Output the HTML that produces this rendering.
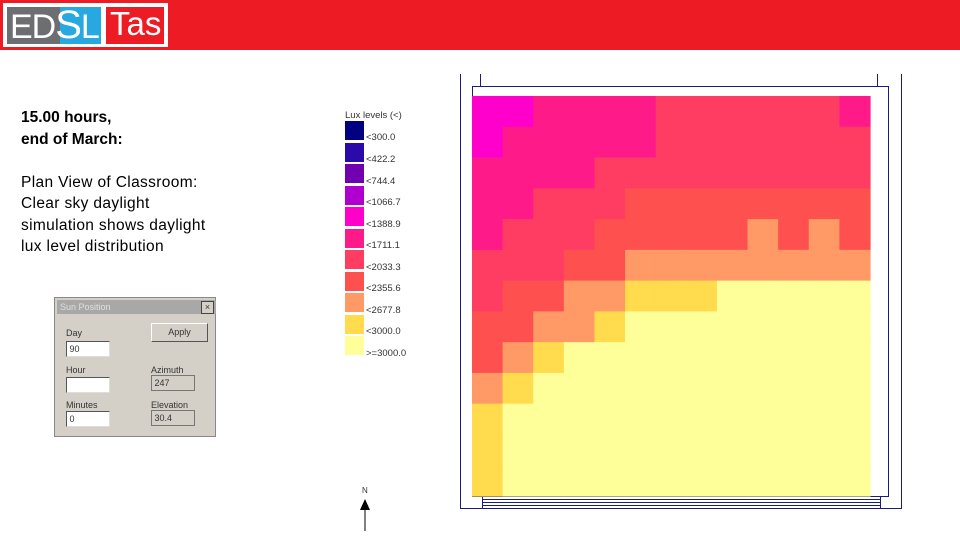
<!DOCTYPE html>
<html><head><meta charset="utf-8"><style>
body{margin:0;width:960px;height:540px;overflow:hidden;background:#fff;font-family:"Liberation Sans",sans-serif;position:relative}
.hdr{position:absolute;left:0;top:0;width:960px;height:50px;background:#ed1c24}
.txt{position:absolute;left:21px;top:107px;font-size:15.5px;line-height:21.5px;color:#000;letter-spacing:0.35px}
.dlg{position:absolute;left:54px;top:297px;width:160px;height:138px;background:#d4d0c8;border:1px solid #888;font-size:9px;color:#333}
.dlg div{position:absolute}
.in{background:#fff;border:1px solid #555;border-right-color:#ddd;border-bottom-color:#ddd}
</style></head><body>
<div class="hdr"></div>
<div style="position:absolute;left:3px;top:3px;width:165px;height:44px;background:#fff"></div>
<div style="position:absolute;left:7px;top:7px;width:53px;height:37px;background:#6d6e71"></div>
<div style="position:absolute;left:60px;top:7px;width:41px;height:37px;background:#27a8e0"></div>
<div style="position:absolute;left:106px;top:7px;width:58px;height:37px;background:#ed1c24"></div>
<div style="position:absolute;left:10px;top:5px;font-size:34px;color:#fff;letter-spacing:-1px;line-height:40px">ED<span style="font-size:40px">S</span>L</div>
<div style="position:absolute;left:110px;top:4px;font-size:33px;color:#fff;line-height:40px">Tas</div>
<div class="txt"><span style="font-weight:bold;letter-spacing:0">15.00 hours,<br>end of March:</span><br><br>Plan View of Classroom:<br>Clear sky daylight<br>simulation shows daylight<br>lux level distribution</div>
<div class="dlg">
<div style="left:2px;top:2px;width:156px;height:14px;background:#a8a8a8;color:#e0e0e0;padding-left:3px;line-height:14px">Sun Position</div>
<div style="left:146px;top:3px;width:11px;height:11px;background:#d4d0c8;border:1px solid #444;font-size:9px;line-height:10px;text-align:center">×</div>
<div style="left:11px;top:30px">Day</div>
<div class="in" style="left:11px;top:43px;width:42px;height:14px;line-height:14px">&nbsp;90</div>
<div style="left:96px;top:25px;width:55px;height:17px;border:1px solid #fff;border-right-color:#555;border-bottom-color:#555;text-align:center;line-height:17px">Apply</div>
<div style="left:11px;top:67px">Hour</div>
<div class="in" style="left:11px;top:79px;width:42px;height:14px"></div>
<div style="left:96px;top:67px">Azimuth</div>
<div style="left:96px;top:77px;width:42px;height:14px;border:1px solid #777;line-height:14px">&nbsp;247</div>
<div style="left:11px;top:102px">Minutes</div>
<div class="in" style="left:11px;top:113px;width:42px;height:14px;line-height:14px">&nbsp;0</div>
<div style="left:96px;top:102px">Elevation</div>
<div style="left:96px;top:112px;width:42px;height:14px;border:1px solid #777;line-height:14px">&nbsp;30.4</div>
</div>
<svg style="position:absolute;left:0;top:0" width="960" height="540">
<g font-size="9.5" fill="#333" font-family="Liberation Sans">
<text x="345" y="118">Lux levels (&lt;)</text>
<rect x="345" y="121" width="19" height="19" fill="#000080"/><text x="366" y="140">&lt;300.0</text>
<rect x="345" y="143" width="19" height="19" fill="#2a0aa8"/><text x="366" y="162">&lt;422.2</text>
<rect x="345" y="164" width="19" height="19" fill="#7000b0"/><text x="366" y="184">&lt;744.4</text>
<rect x="345" y="186" width="19" height="19" fill="#b000d0"/><text x="366" y="205">&lt;1066.7</text>
<rect x="345" y="207" width="19" height="19" fill="#ff00cc"/><text x="366" y="227">&lt;1388.9</text>
<rect x="345" y="229" width="19" height="19" fill="#ff1a8a"/><text x="366" y="248">&lt;1711.1</text>
<rect x="345" y="250" width="19" height="19" fill="#ff3d63"/><text x="366" y="270">&lt;2033.3</text>
<rect x="345" y="272" width="19" height="19" fill="#ff5050"/><text x="366" y="291">&lt;2355.6</text>
<rect x="345" y="293" width="19" height="19" fill="#ff9966"/><text x="366" y="313">&lt;2677.8</text>
<rect x="345" y="315" width="19" height="19" fill="#ffdb4d"/><text x="366" y="334">&lt;3000.0</text>
<rect x="345" y="336" width="19" height="19" fill="#ffff99"/><text x="366" y="356">&gt;=3000.0</text>
<text x="362" y="493" font-size="8">N</text>
</g>
<line x1="365" y1="500" x2="365" y2="531" stroke="#000"/>
<path d="M360 510 L365 499 L370 510 Z" fill="#000"/>
<g stroke="#1a1a80" fill="none" stroke-width="1">
<line x1="460.5" y1="74" x2="460.5" y2="508"/><line x1="901.5" y1="74" x2="901.5" y2="508"/>
<line x1="460" y1="508.5" x2="902" y2="508.5"/>
<line x1="480.5" y1="74" x2="480.5" y2="86"/><line x1="877.5" y1="74" x2="877.5" y2="86"/>
<rect x="472.5" y="86.5" width="416" height="410"/>
<line x1="482" y1="499.5" x2="880" y2="499.5"/><line x1="482" y1="502.5" x2="880" y2="502.5"/><line x1="482" y1="505.5" x2="880" y2="505.5"/>
<line x1="482.5" y1="497" x2="482.5" y2="508"/><line x1="880.5" y1="497" x2="880.5" y2="508"/>
</g>
<g id="grid"></g>
</svg>
<script>
var C={M:"#ff00cc",P:"#ff1a8a",R:"#ff3d63",O:"#ff5050",A:"#ff9966",Y:"#ffdb4d",L:"#ffff99"};
var rows=["MMPPPPRRRRRRP","MPPPPPRRRRRRR","PPPPRRRRRRRRR","PPRRROOOOOOOO","PRRROOOOOAOAO","RRROOAAAAAAAA","ROOAAYYYLLLLL","OOAAYLLLLLLLL","OAYLLLLLLLLLL","AYLLLLLLLLLLL","YLLLLLLLLLLLL","YLLLLLLLLLLLL","YLLLLLLLLLLLL"];
var s="",w=398/13,h=400/13;
for(var r=0;r<13;r++)for(var c=0;c<13;c++){var x=472+c*w,y=96+r*h;s+='<rect x="'+x.toFixed(2)+'" y="'+y.toFixed(2)+'" width="'+(w+0.6).toFixed(2)+'" height="'+(h+0.6).toFixed(2)+'" fill="'+C[rows[r][c]]+'"/>';}
document.getElementById("grid").innerHTML=s;
</script>
</body></html>
